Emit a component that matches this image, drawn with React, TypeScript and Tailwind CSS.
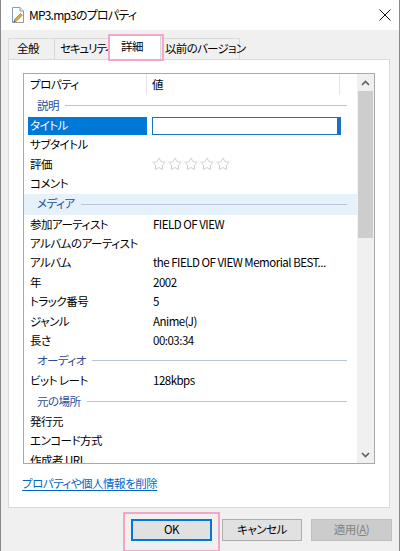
import { Star } from "lucide-react";

type Row =
  | { kind: "group"; label: string; hl?: boolean }
  | { kind: "item"; label: string; value?: string; stars?: boolean; selected?: boolean };

const rows: Row[] = [
  { kind: "group", label: "説明" },
  { kind: "item", label: "タイトル", selected: true },
  { kind: "item", label: "サブタイトル" },
  { kind: "item", label: "評価", stars: true },
  { kind: "item", label: "コメント" },
  { kind: "group", label: "メディア", hl: true },
  { kind: "item", label: "参加アーティスト", value: "FIELD OF VIEW" },
  { kind: "item", label: "アルバムのアーティスト" },
  { kind: "item", label: "アルバム", value: "the FIELD OF VIEW Memorial BEST..." },
  { kind: "item", label: "年", value: "2002" },
  { kind: "item", label: "トラック番号", value: "5" },
  { kind: "item", label: "ジャンル", value: "Anime(J)" },
  { kind: "item", label: "長さ", value: "00:03:34" },
  { kind: "group", label: "オーディオ" },
  { kind: "item", label: "ビット レート", value: "128kbps" },
  { kind: "group", label: "元の場所" },
  { kind: "item", label: "発行元" },
  { kind: "item", label: "エンコード方式" },
  { kind: "item", label: "作成者 URL" },
];

function FileIcon() {
  return (
    <svg width="14" height="16" viewBox="0 0 14 16">
      <path d="M1.5 0.5h7.5l3.5 3.5v11.5h-11z" fill="#ffffff" stroke="#8c9bb0" />
      <path d="M9 0.5v3.5h3.5" fill="#e8edf3" stroke="#8c9bb0" />
      <path d="M3 13l6.5-6.5 1.8 1.8-6.5 6.5z" fill="#e2a33a" stroke="#9a6a1c" strokeWidth="0.6" />
      <path d="M3 13l1.8 1.8-2.6 0.8z" fill="#3b6fc4" />
    </svg>
  );
}

function Chevron({ up }: { up?: boolean }) {
  return (
    <svg width="9" height="6" viewBox="0 0 9 6">
      <polyline
        points={up ? "1,5 4.5,1.5 8,5" : "1,1 4.5,4.5 8,1"}
        fill="none"
        stroke="#606060"
        strokeWidth="1.6"
      />
    </svg>
  );
}

export default function App() {
  return (
    <div className="w-[400px] h-[551px] overflow-hidden bg-[#f0f0f0] border-x border-[#8a8a8a] flex flex-col text-[11.5px] tracking-[-0.5px] text-black font-['Noto_Sans_CJK_JP',sans-serif] [font-feature-settings:'palt']">
      {/* title bar */}
      <div className="h-[30px] bg-white flex items-center pl-[10px] pr-[7px] shrink-0">
        <FileIcon />
        <span className="ml-[4px] text-[12px] tracking-[-0.8px] leading-none">MP3.mp3のプロパティ</span>
        <svg className="ml-auto mr-[1px]" width="12" height="12" viewBox="0 0 12 12">
          <path d="M0.5 0.5l11 11M11.5 0.5l-11 11" stroke="#111" strokeWidth="1" />
        </svg>
      </div>

      {/* tabs */}
      <div className="h-[29px] flex items-end pl-[7px] shrink-0 whitespace-nowrap">
        <div className="h-[21px] w-[47px] border border-b-0 border-[#d9d9d9] flex items-center pl-[8px]">全般</div>
        <div className="h-[21px] w-[56px] border border-l-0 border-b-0 border-[#d9d9d9] flex items-center pl-[5px] tracking-[-1.1px]">セキュリティ</div>
        <div className="relative h-[25px] w-[52px] -ml-[2px] -mb-px z-10 bg-white border border-b-0 border-[#d9d9d9] flex items-center pl-[11px] pb-[2px]">
          詳細
          <div className="absolute -left-[2px] -top-[2px] w-[56px] h-[27px] border-[2.5px] border-[#f2a7c6]" />
        </div>
        <div className="h-[21px] w-[80px] -ml-[1px] border border-b-0 border-[#d9d9d9] flex items-center pl-[4px] tracking-[-0.7px]">以前のバージョン</div>
      </div>

      {/* panel */}
      <div className="ml-[7px] w-[382px] h-[449px] bg-white border border-[#d9d9d9] shrink-0 pt-[13px] pl-[14px]">
        <div className="w-[352px] h-[391px] border border-[#a9a9a9] flex">
          <div className="flex-1 overflow-hidden">
            {/* header */}
            <div className="h-[21px] flex items-stretch">
              <div className="w-[123px] pl-[6px] flex items-center border-r border-[#e5e5e5]">プロパティ</div>
              <div className="w-[193px] pl-[5px] flex items-center border-r border-[#e5e5e5]">値</div>
            </div>
            {rows.map((r, i) =>
              r.kind === "group" ? (
                <div
                  key={i}
                  className={`h-[21px] flex items-center pl-[13px] pr-[10px] gap-[6px] ${r.hl ? "bg-[#e5f1fb]" : ""}`}
                >
                  <span className="text-[#2c4c96]">{r.label}</span>
                  <div className="flex-1 h-px bg-[#b7c4da]" />
                </div>
              ) : (
                <div key={i} className="h-[19.4px] flex items-center">
                  <div
                    className={`ml-[4px] w-[119px] h-[18px] pl-[2px] flex items-center whitespace-nowrap ${
                      r.selected ? "bg-[#0078d7] text-white" : ""
                    }`}
                  >
                    {r.label}
                  </div>
                  {r.selected ? (
                    <div className="ml-[5px] w-[189px] h-[18px] bg-white border border-[#1a72c6] border-r-[4px]" />
                  ) : r.stars ? (
                    <div className="ml-[5px] flex gap-[2px]">
                      {[0, 1, 2, 3, 4].map((s) => (
                        <Star key={s} size={14} strokeWidth={1.3} color="#bdbdbd" />
                      ))}
                    </div>
                  ) : (
                    <div className="pl-[6px] whitespace-nowrap">{r.value ?? ""}</div>
                  )}
                </div>
              )
            )}
          </div>
          {/* scrollbar */}
          <div className="w-[17px] bg-[#f0f0f0] flex flex-col">
            <div className="h-[17px] flex items-center justify-center">
              <Chevron up />
            </div>
            <div className="h-[147px] mx-[1px] bg-[#cdcdcd]" />
            <div className="flex-1" />
            <div className="h-[17px] flex items-center justify-center">
              <Chevron />
            </div>
          </div>
        </div>
        <div className="pt-[12px] -ml-[1px] leading-[14px]">
          <span className="text-[#0066cc] underline underline-offset-[2px]">プロパティや個人情報を削除</span>
        </div>
      </div>

      {/* buttons */}
      <div className="flex justify-end gap-[9px] pr-[7px] pt-[11px]">
        <div className="relative">
          <div className="w-[81px] h-[22px] bg-[#e1e1e1] border-2 border-[#0078d7] flex items-center justify-center">OK</div>
          <div className="absolute -left-[8px] -top-[7px] w-[97px] h-[40px] border-[2.5px] border-[#f2a7c6]" />
        </div>
        <div className="w-[80px] h-[22px] ml-[1px] bg-[#e1e1e1] border border-[#adadad] flex items-center justify-center">キャンセル</div>
        <div className="w-[81px] h-[22px] bg-[#cccccc] border border-[#bfbfbf] text-[#838383] flex items-center justify-center">
          適用(<span className="underline">A</span>)
        </div>
      </div>
    </div>
  );
}
